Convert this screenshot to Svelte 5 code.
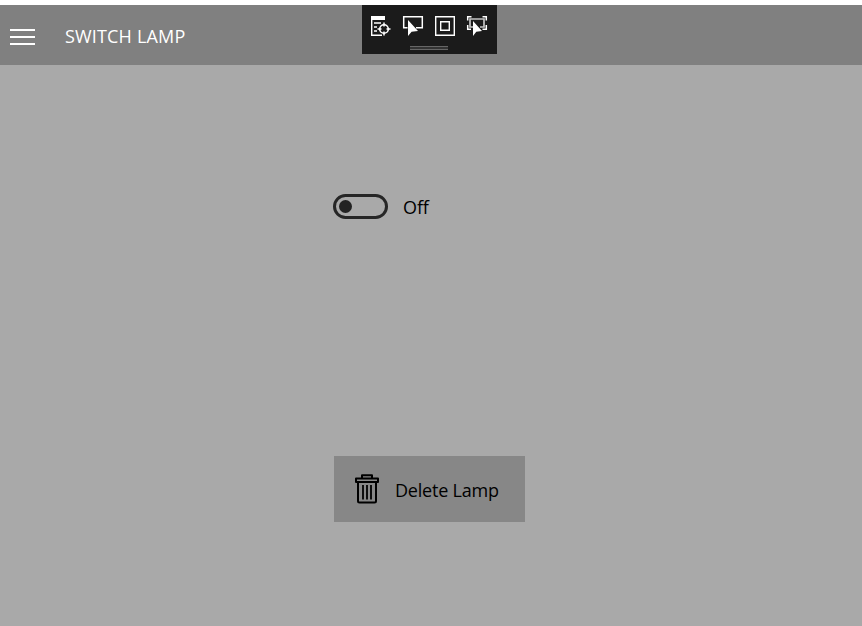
<script>
  let on = $state(false);
</script>

<div class="app">
  <header>
    <button class="menu" aria-label="Menu"><span></span><span></span><span></span></button>
    <h1>SWITCH LAMP</h1>
    <div class="debug">
      <div class="tools">
        <svg width="22" height="22" viewBox="0 0 22 22" fill="none" stroke="#fff">
          <path d="M1 1h14v4H1z" fill="#fff" stroke="none" />
          <path d="M1.700 4v16.300H12M4 8h7M4 12h3M4 16h3" stroke-width="1.400" />
          <circle cx="14" cy="14" r="4.300" stroke-width="1.600" />
          <path d="M14 7.500v4M14 16.500v4M7.500 14h4M16.500 14h4" stroke-width="1.500" />
        </svg>
        <svg width="22" height="22" viewBox="0 0 22 22" fill="none" stroke="#fff">
          <path d="M5.500 12.800H1.700V1.700h18.600v11.100H14" stroke-width="1.500" />
          <path d="M6 5v16l3.600-4.300 6.400-.7z" fill="#fff" stroke="none" />
        </svg>
        <svg width="22" height="22" viewBox="0 0 22 22" fill="none" stroke="#fff" stroke-width="1.400">
          <path d="M1.700 1.700h18.600v18.600H1.700zM6.700 6.700h8.600v8.600H6.700z" />
        </svg>
        <svg width="22" height="22" viewBox="0 0 22 22" fill="none" stroke="#fff">
          <path d="M1.700 5.500V1.700H5.500M16.500 1.700h3.800V5.500M1.700 10v4.300H5M16.500 14.300h3.800V10" stroke-width="1.500" />
          <path d="M7 12H4V4h14v8h-4" stroke="#c4c4c4" stroke-width="1.700" />
          <path d="M7 6v15l3.300-4.300 5.700-.7z" fill="#fff" stroke="none" />
        </svg>
      </div>
      <div class="grip"></div>
    </div>
  </header>
  <main>
    <button class="toggle" role="switch" aria-checked={on} onclick={() => (on = !on)}>
      <span class="track" class:on><span class="knob"></span></span>
      <span class="state">{on ? 'On' : 'Off'}</span>
    </button>
    <button class="delete">
      <svg width="26" height="32" viewBox="0 0 26 32" fill="none" stroke="#000" stroke-width="2">
        <path d="M8 5V2.200h10V5M2 5.500h22v3.500H2zM4 9.500V28q0 1.500 1.500 1.500h15q1.500 0 1.500-1.500V9.500" stroke-linejoin="round" />
        <path d="M9 12v14.500M13 12v14.500M17 12v14.500" stroke-width="1.800" />
      </svg>
      <span>Delete Lamp</span>
    </button>
  </main>
</div>

<style>
  :global(body) { background: #fff; }
  .app {
    box-sizing: border-box;
    height: 626px;
    padding-top: 5px;
    font-family: 'Open Sans', 'Noto Sans', sans-serif;
    font-size: 18px;
    line-height: 24px;
    display: flex;
    flex-direction: column;
  }
  button {
    border: 0;
    padding: 0;
    background: none;
    font: inherit;
    color: #000;
    display: flex;
    align-items: center;
  }
  header {
    position: relative;
    height: 60px;
    background: #808080;
    display: flex;
    align-items: center;
    padding-left: 10px;
  }
  .menu {
    flex-direction: column;
    gap: 5px;
    width: 25px;
    padding-top: 4px;
  }
  .menu span { width: 25px; height: 2px; background: #fff; }
  h1 {
    margin: 1px 0 0 30px;
    font-size: 18px;
    font-weight: 400;
    letter-spacing: 0.17px;
    color: #fff;
  }
  .debug {
    box-sizing: border-box;
    position: absolute;
    left: 362px;
    top: 0;
    width: 135px;
    height: 49px;
    padding-left: 8px;
    background: #1b1b1b;
    display: flex;
    flex-direction: column;
    align-items: flex-start;
  }
  .tools { display: flex; gap: 10px; padding-top: 10px; height: 31px; }
  .grip {
    width: 38px;
    height: 2px;
    margin-left: 40px;
    border: solid #666;
    border-width: 1px 0;
    background: #333;
  }
  main {
    flex: 1;
    background: #a9a9a9;
    display: flex;
    flex-direction: column;
    align-items: flex-start;
    padding: 129px 0 0 333px;
  }
  .track {
    box-sizing: border-box;
    width: 55px;
    height: 25px;
    border: 3px solid #262626;
    border-radius: 13px;
    display: flex;
    align-items: center;
    padding: 0 3px;
  }
  .on { justify-content: flex-end; }
  .knob { width: 13px; height: 13px; border-radius: 50%; background: #222; }
  .state { margin: 1px 0 0 15px; letter-spacing: -0.1px; }
  .toggle { height: 25px; }
  .delete {
    box-sizing: border-box;
    width: 191px;
    height: 66px;
    margin: 237px 0 0 1px;
    padding-left: 20px;
    background: #878787;
    gap: 15px;
  }
  .delete span { margin-top: 2px; letter-spacing: -0.2px; white-space: nowrap; }
</style>
